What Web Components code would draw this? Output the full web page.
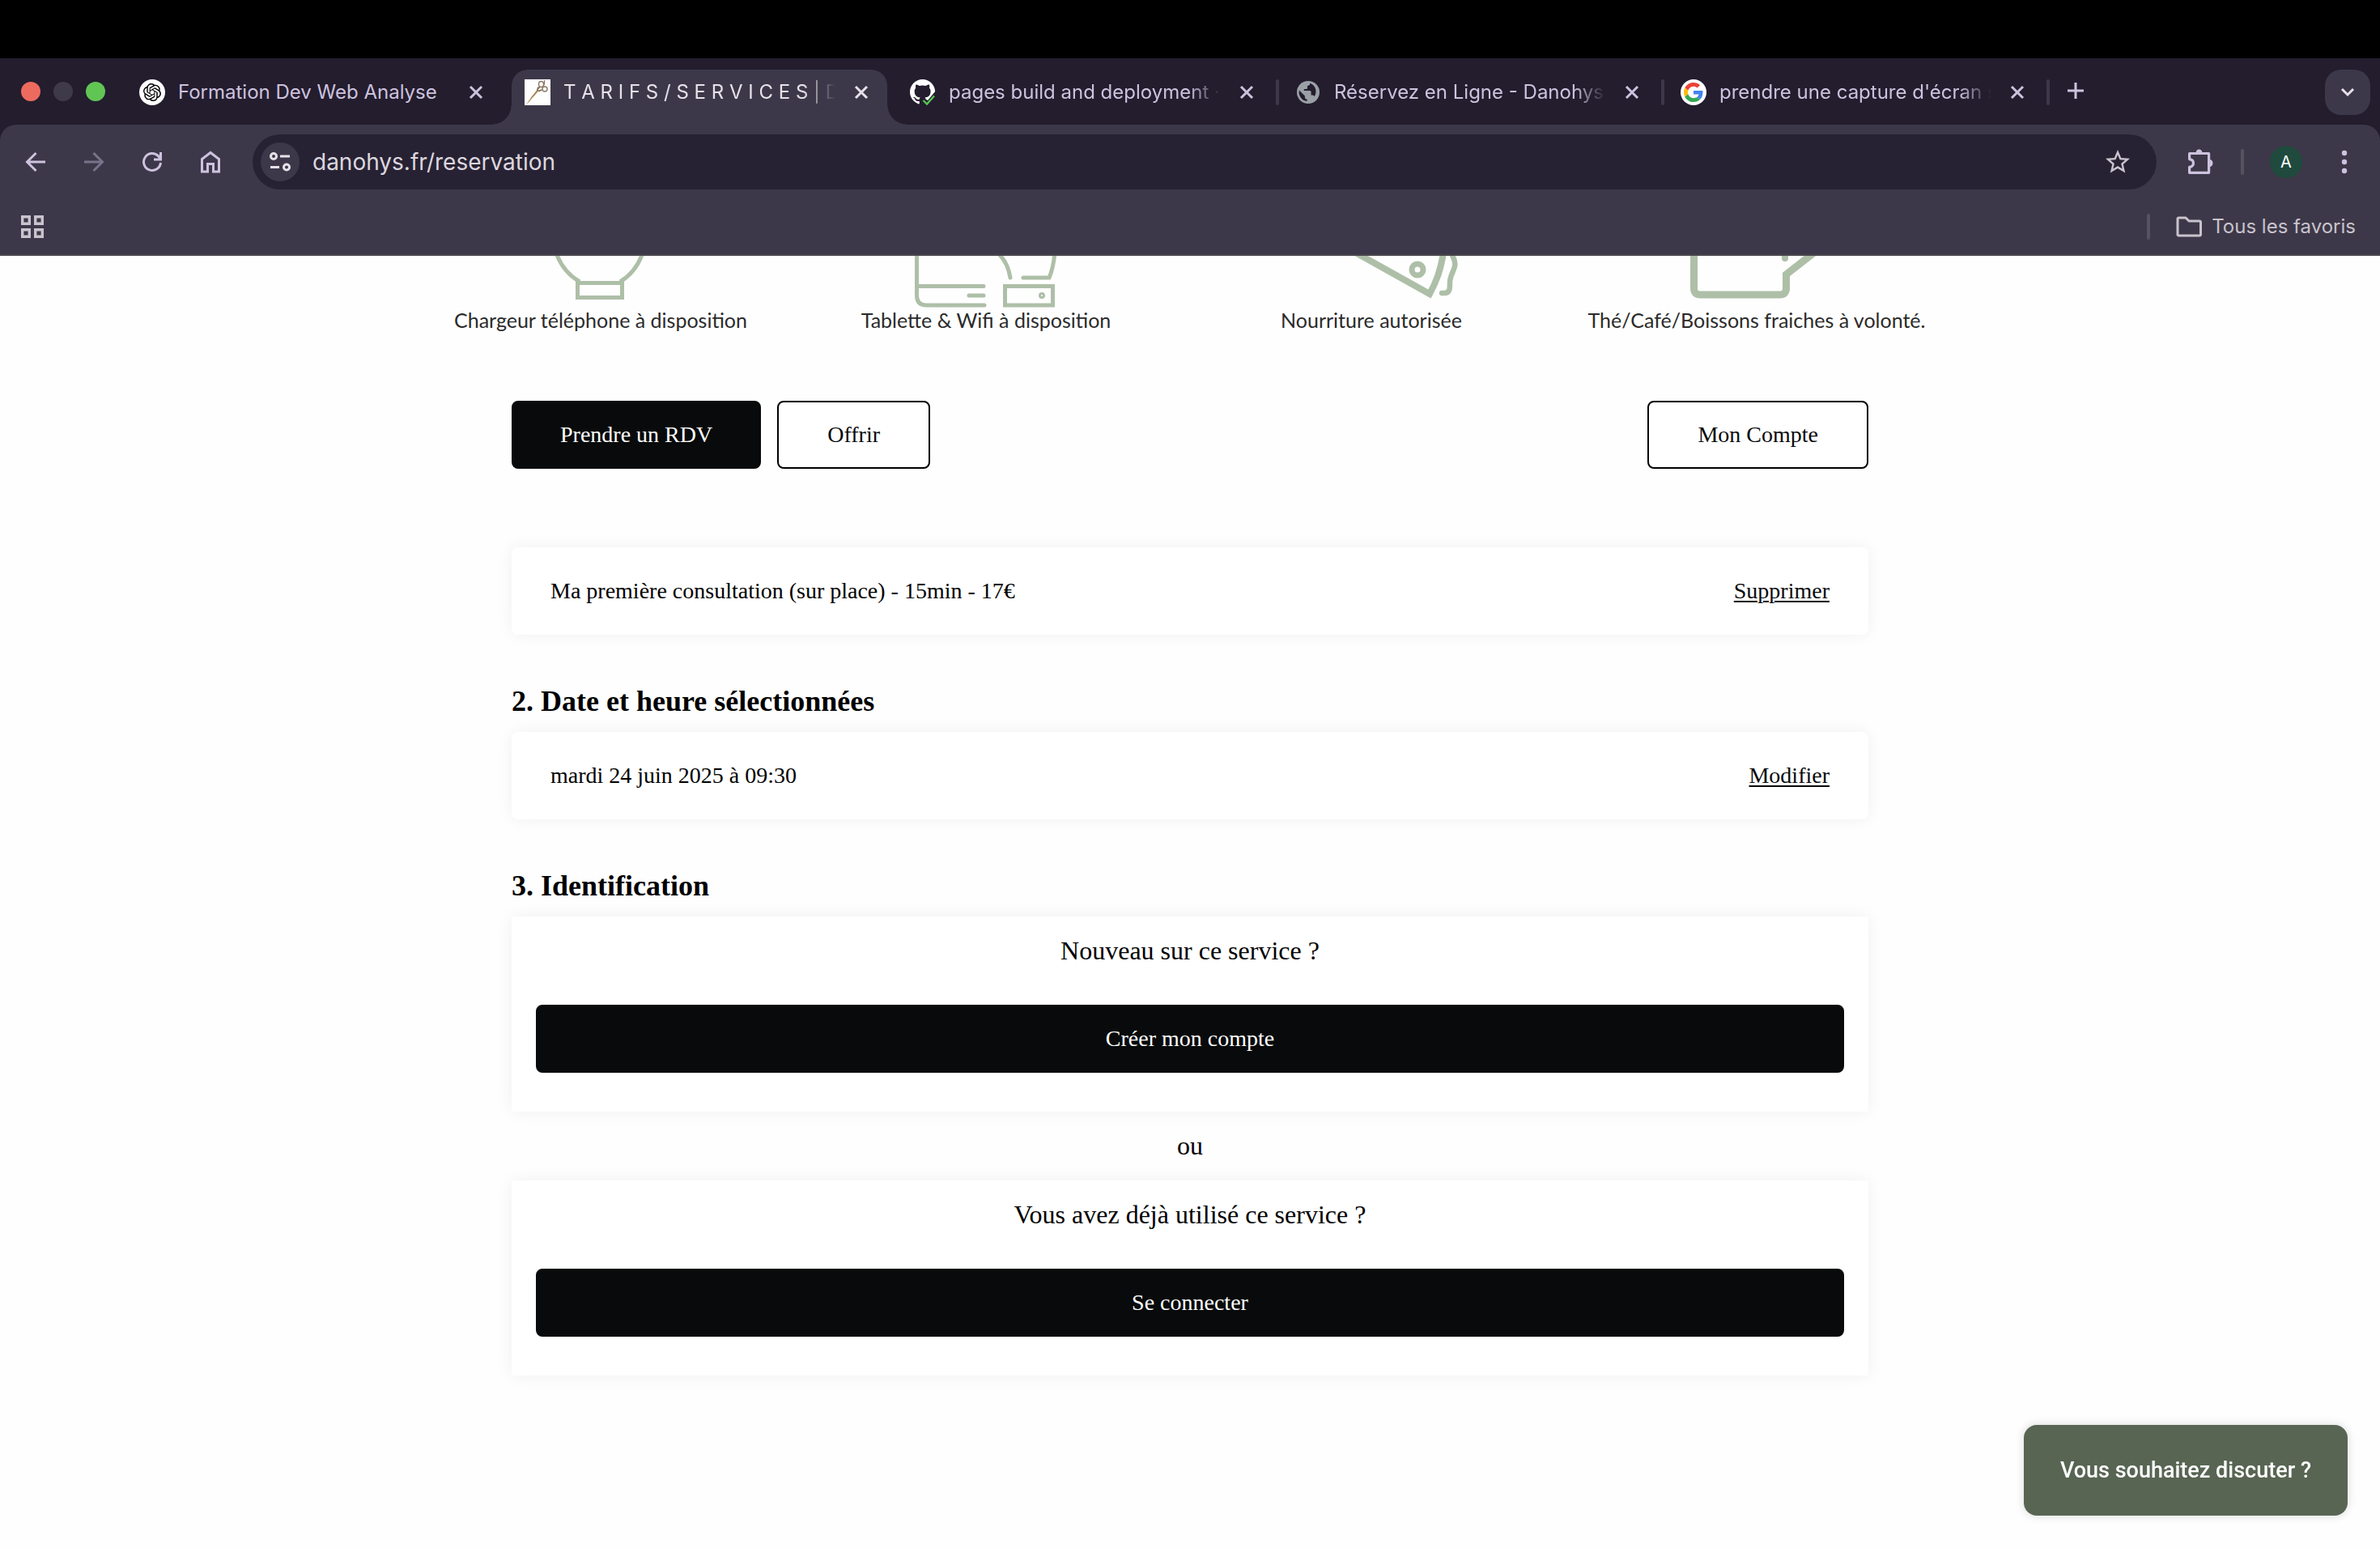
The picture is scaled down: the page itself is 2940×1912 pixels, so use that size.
<!DOCTYPE html>
<html lang="fr">
<head>
<meta charset="utf-8">
<meta name="viewport" content="width=device-width, initial-scale=1">
<title>TARIFS/SERVICES | Danohys</title>
<style>
  html { background: #fefefe; }
  body { margin: 0; font-family: "Liberation Serif", "Times New Roman", serif; color: #000; }
</style>
</head>
<body>
<browser-chrome></browser-chrome>
<main>
  <feature-row>
    <feature-item icon="charger">Chargeur téléphone à disposition</feature-item>
    <feature-item icon="tablet">Tablette &amp; Wifi à disposition</feature-item>
    <feature-item icon="food">Nourriture autorisée</feature-item>
    <feature-item icon="drink">Thé/Café/Boissons fraiches à volonté.</feature-item>
  </feature-row>
  <booking-flow></booking-flow>
</main>
<chat-launcher>Vous souhaitez discuter ?</chat-launcher>

<script>
const define = (name, html) => {
  const tpl = document.createElement('template');
  tpl.innerHTML = html;
  customElements.define(name, class extends HTMLElement {
    constructor() {
      super();
      this.attachShadow({ mode: 'open' }).append(tpl.content.cloneNode(true));
    }
  });
};

const ICONS = {
  openai: `<svg viewBox="0 0 32 32" width="32" height="32"><circle cx="16" cy="16" r="16" fill="#fff"/><path transform="translate(5 5) scale(.917)" d="M22.2819 9.8211a5.9847 5.9847 0 0 0-.5157-4.9108 6.0462 6.0462 0 0 0-6.5098-2.9A6.0651 6.0651 0 0 0 4.9807 4.1818a5.9847 5.9847 0 0 0-3.9977 2.9 6.0462 6.0462 0 0 0 .7427 7.0966 5.98 5.98 0 0 0 .511 4.9107 6.051 6.051 0 0 0 6.5146 2.9001A5.9847 5.9847 0 0 0 13.2599 24a6.0557 6.0557 0 0 0 5.7718-4.2058 5.9894 5.9894 0 0 0 3.9977-2.9001 6.0557 6.0557 0 0 0-.7475-7.0729zm-9.022 12.6081a4.4755 4.4755 0 0 1-2.8764-1.0408l.1419-.0804 4.7783-2.7582a.7948.7948 0 0 0 .3927-.6813v-6.7369l2.02 1.1686a.071.071 0 0 1 .038.052v5.5826a4.504 4.504 0 0 1-4.4945 4.4944zm-9.6607-4.1254a4.4708 4.4708 0 0 1-.5346-3.0137l.142.0852 4.783 2.7582a.7712.7712 0 0 0 .7806 0l5.8428-3.3685v2.3324a.0804.0804 0 0 1-.0332.0615L9.74 19.9502a4.4992 4.4992 0 0 1-6.1408-1.6464zM2.3408 7.8956a4.485 4.485 0 0 1 2.3655-1.9728V11.6a.7664.7664 0 0 0 .3879.6765l5.8144 3.3543-2.0201 1.1685a.0757.0757 0 0 1-.071 0l-4.8303-2.7865A4.504 4.504 0 0 1 2.3408 7.872zm16.5963 3.8558L13.1038 8.364 15.1192 7.2a.0757.0757 0 0 1 .071 0l4.8303 2.7913a4.4944 4.4944 0 0 1-.6765 8.1042v-5.6772a.79.79 0 0 0-.407-.667zm2.0107-3.0231l-.142-.0852-4.7735-2.7818a.7759.7759 0 0 0-.7854 0L9.409 9.2297V6.8974a.0662.0662 0 0 1 .0284-.0615l4.8303-2.7866a4.4992 4.4992 0 0 1 6.6802 4.66zM8.3065 12.863l-2.02-1.1638a.0804.0804 0 0 1-.038-.0567V6.0742a4.4992 4.4992 0 0 1 7.3757-3.4537l-.142.0805L8.704 5.459a.7948.7948 0 0 0-.3927.6813zm1.0976-2.3654l2.602-1.4998 2.6069 1.4998v2.9994l-2.5974 1.4997-2.6067-1.4997Z"/></svg>`,
  scissors: `<svg viewBox="0 0 32 32" width="32" height="32" fill="none"><path fill="#fff" d="M0 0h32v32H0z"/><path d="M2.500 31 8 22.500 16 12.500 17.500 14 10 22.500Z" fill="#8a6238"/><path d="M3.500 29.500 16.500 14" stroke="#c9a86b" stroke-width="1"/><path d="M15.500 13.500 17 9.500M17 14.500 21.500 13M16 12c1-1 2-1 3-3" stroke="#75604a" stroke-width="1.500"/><ellipse cx="20.500" cy="6" rx="3" ry="3.500" stroke="#8b7a66" stroke-width="1.400"/><circle cx="25" cy="12" r="3" stroke="#8b7a66" stroke-width="1.400"/><path d="M24.500 1c0 3 .6 4-.8 6.500" stroke="#8b7a66" stroke-width="1.200"/></svg>`,
  github: `<svg viewBox="0 0 32 32" width="32" height="32"><path transform="scale(1.95)" fill="#fff" d="M8 0C3.580 0 0 3.580 0 8c0 3.540 2.290 6.530 5.470 7.590.4.07.55-.17.55-.38 0-.19-.01-.82-.01-1.490-2.010.37-2.530-.49-2.690-.94-.09-.23-.48-.94-.82-1.130-.28-.15-.68-.52-.01-.53.63-.01 1.080.58 1.230.82.72 1.210 1.870.87 2.330.66.07-.52.28-.87.51-1.070-1.780-.2-3.640-.89-3.640-3.950 0-.87.31-1.590.82-2.150-.08-.2-.36-1.020.08-2.120 0 0 .67-.21 2.200.82.64-.18 1.320-.27 2-.27.68 0 1.360.09 2 .27 1.530-1.040 2.200-.82 2.200-.82.44 1.100.16 1.920.08 2.120.51.56.82 1.270.82 2.150 0 3.070-1.870 3.750-3.650 3.950.29.25.54.73.54 1.480 0 1.070-.01 1.930-.01 2.200 0 .21.15.46.55.38A8.013 8.013 0 0 0 16 8c0-4.420-3.580-8-8-8z"/><path fill="#231d2e" d="M12.500 24.500 17 23l5 3 10-12v18H12.500z"/><path d="M16.500 26l4.500 4.500L30 20.500" fill="none" stroke="#57c452" stroke-width="2.400"/></svg>`,
  globe: `<svg viewBox="0 0 32 32" width="32" height="32"><circle cx="16" cy="16" r="14" fill="#9aa0a6"/><path fill="#231d2e" d="M18.500 4.800c-.3 2-1.300 3-3.500 3.200v2.500c0 1-.8 1.600-1.800 1.600h-2.400V14H18c1 0 1.600.8 1.600 1.600v4h1.500c1.200 0 2 .7 2.500 1.700A11 11 0 0 0 18.500 4.800zM4.900 13.500A11.200 11.200 0 0 0 14.600 27v-2.200c-1.500 0-2.700-1.300-2.700-2.800v-1.400z"/></svg>`,
  google: `<svg viewBox="0 0 32 32" width="32" height="32"><circle cx="16" cy="16" r="16" fill="#fff"/><g transform="translate(4 4) scale(.5)"><path fill="#EA4335" d="M24 9.500c3.540 0 6.710 1.220 9.210 3.600l6.850-6.850C35.900 2.380 30.470 0 24 0 14.620 0 6.510 5.380 2.560 13.220l7.980 6.190C12.430 13.720 17.740 9.500 24 9.500z"/><path fill="#4285F4" d="M46.980 24.550c0-1.570-.15-3.090-.38-4.550H24v9.020h12.940c-.58 2.960-2.260 5.480-4.780 7.180l7.730 6c4.510-4.180 7.090-10.360 7.090-17.650z"/><path fill="#FBBC05" d="M10.530 28.590c-.48-1.450-.76-2.990-.76-4.590s.27-3.140.76-4.590l-7.980-6.190C.92 16.460 0 20.120 0 24c0 3.880.92 7.540 2.560 10.780l7.970-6.190z"/><path fill="#34A853" d="M24 48c6.480 0 11.930-2.130 15.890-5.810l-7.730-6c-2.150 1.450-4.920 2.300-8.160 2.300-6.260 0-11.570-4.220-13.470-9.910l-7.980 6.190C6.510 42.620 14.620 48 24 48z"/></g></svg>`
};

define('tab-strip', `
  <style>
    :host { display: flex; align-items: flex-start; padding: 14px 12px 0 26px; height: 68px; }
    .lights { display: flex; gap: 16px; padding-top: 15px; width: 130px; box-sizing: border-box; }
    .lights button { width: 24px; height: 24px; padding: 0; border: 0; border-radius: 50%; background: #3f3a49; }
    .lights .close { background: #ed6a5e; }
    .lights .zoom { background: #61c554; }
    nav { display: flex; flex: 1; min-width: 0; }
    .new, .search { display: grid; place-items: center; padding: 0; border: 0; background: none; }
    .new { width: 56px; height: 52px; }
    .search { width: 56px; height: 56px; border-radius: 20px; background: #3d3849; }
  </style>
  <div class="lights">
    <button class="close" aria-label="Fermer"></button><button aria-label="Réduire"></button><button class="zoom" aria-label="Agrandir"></button>
  </div>
  <nav>
    <browser-tab icon="openai">Formation Dev Web Analyse</browser-tab>
    <browser-tab icon="scissors" active clipped>T A R I F S / S E R V I C E S | D</browser-tab>
    <browser-tab icon="github" divided clipped>pages build and deployment ·</browser-tab>
    <browser-tab icon="globe" divided clipped>Réservez en Ligne - Danohys</browser-tab>
    <browser-tab icon="google" divided clipped>prendre une capture d'écran s</browser-tab>
    <button class="new" aria-label="Nouvel onglet"><svg width="22" height="22" fill="none" stroke="#cdc2de" stroke-width="3"><path d="M11 1v20M1 11h20"/></svg></button>
  </nav>
  <button class="search" aria-label="Rechercher dans les onglets"><svg width="20" height="14" fill="none" stroke="#e6e1e9" stroke-width="3"><path d="M3 3l7 7 7-7"/></svg></button>
`);

customElements.define('browser-tab', class extends HTMLElement {
  constructor() {
    super();
    this.attachShadow({ mode: 'open' });
  }
  connectedCallback() {
    this.shadowRoot.innerHTML = `
      <style>
        :host { display: flex; flex: 0 1 476px; min-width: 0; color: #cdc2de; }
        .tab { position: relative; display: flex; align-items: center; gap: 16px; flex: 1; min-width: 0; height: 68px; padding: 0 16px 12px; box-sizing: border-box; }
        .gap { width: 12px; height: 32px; margin-top: 12px; display: grid; place-items: center; }
        :host([divided]) .gap::before { content: ""; width: 4px; height: 32px; border-radius: 2px; background: #3d3849; }
        :host([active]) { color: #e6e1e9; }
        :host([active]) .tab { background: #3d3849; border-radius: 20px 20px 0 0; }
        :host([active]) .tab::before, :host([active]) .tab::after { content: ""; position: absolute; bottom: 0; width: 24px; height: 24px; }
        :host([active]) .tab::before { right: 100%; background: radial-gradient(circle at 0 0, transparent 23px, #3d3849 24px); }
        :host([active]) .tab::after { left: 100%; background: radial-gradient(circle at 100% 0, transparent 23px, #3d3849 24px); }
        svg { flex: none; display: block; }
        .title { flex: 1; min-width: 0; overflow: hidden; white-space: nowrap; font-size: 24px; line-height: 32px; }
        :host([clipped]) .title { -webkit-mask-image: linear-gradient(90deg, #000 calc(100% - 40px), transparent); mask-image: linear-gradient(90deg, #000 calc(100% - 40px), transparent); }
        button { width: 32px; height: 32px; padding: 0; border: 0; background: none; display: grid; place-items: center; color: inherit; }
      </style>
      <div class="tab">${ICONS[this.getAttribute('icon')]}<span class="title"><slot></slot></span>
        <button aria-label="Fermer l'onglet"><svg width="18" height="18" fill="none" stroke="currentColor" stroke-width="3"><path d="M2 2l14 14M16 2 2 16"/></svg></button>
      </div><div class="gap"></div>`;
  }
});

define('tool-bar', `
  <style>
    :host { display: flex; align-items: center; padding: 12px 14px; height: 68px; }
    button { display: grid; place-items: center; width: 60px; height: 56px; padding: 0; border: 0; background: none; color: #cdc2de; font: inherit; }
    .nav { display: flex; gap: 12px; margin-right: 22px; }
    .nav .dim { color: #79738a; }
    .omni { flex: 1; min-width: 0; display: flex; align-items: center; height: 68px; padding: 0 18px 0 10px; box-sizing: border-box; border-radius: 34px; background: #272233; }
    .omni .info { width: 48px; height: 48px; border-radius: 50%; background: #3d3849; color: #e6e1e9; }
    .omni .star { color: #c8c3cc; }
    input { flex: 1; min-width: 0; margin: 0 0 0 16px; padding: 0; border: 0; outline: 0; background: none; color: #dcd7df; font: inherit; font-size: 28px; line-height: 36px; }
    .right { display: flex; align-items: center; }
    .ext { margin-left: 24px; }
    hr { width: 4px; height: 32px; margin: 0 22px 0 20px; border: 0; border-radius: 2px; background: #57525f; }
    .me span { display: grid; place-items: center; width: 40px; height: 40px; border-radius: 50%; background: #1f4a3d; color: #fff; font-size: 20px; line-height: 24px; }
    .more { margin-left: 12px; }
  </style>
  <div class="nav">
    <button aria-label="Retour"><svg width="26" height="26" fill="none" stroke="currentColor" stroke-width="3"><path d="M25 13H3M13.500 2 2.500 13l11 11"/></svg></button>
    <button class="dim" aria-label="Avancer"><svg width="26" height="26" fill="none" stroke="currentColor" stroke-width="3"><path d="M1 13h22M12.500 2l11 11-11 11"/></svg></button>
    <button aria-label="Actualiser"><svg width="26" height="26" fill="none" stroke="currentColor" stroke-width="3"><path d="M23.500 14A10.500 10.500 0 1 1 20.500 5.600L23 9"/><path d="M23.500 1v9H15"/></svg></button>
    <button aria-label="Accueil"><svg width="26" height="28" fill="none" stroke="currentColor" stroke-width="3"><path d="M2.500 10.500 13 2.500l10.500 8V26h-7v-9.500h-7V26h-7z"/></svg></button>
  </div>
  <div class="omni">
    <button class="info" aria-label="Informations sur le site"><svg width="28" height="26" fill="none" stroke="currentColor" stroke-width="3"><circle cx="6" cy="6" r="3.500"/><path d="M14 6h12M2 19.500h11"/><circle cx="22" cy="19.500" r="3.500"/></svg></button>
    <input type="text" aria-label="Adresse" value="danohys.fr/reservation">
    <button class="star" aria-label="Ajouter aux favoris"><svg width="36" height="36" viewBox="0 0 24 24" fill="currentColor"><path d="M22 9.240l-7.190-.62L12 2 9.190 8.630 2 9.240l5.460 4.730L5.820 21 12 17.270 18.180 21l-1.630-7.030L22 9.240zM12 15.400l-3.760 2.270 1-4.280-3.320-2.880 4.380-.38L12 6.100l1.710 4.040 4.380.38-3.320 2.880 1 4.280L12 15.400z"/></svg></button>
  </div>
  <div class="right">
    <button class="ext" aria-label="Extensions"><svg width="36" height="36" fill="none" stroke="currentColor" stroke-width="3.200" stroke-linejoin="round"><path d="M4.600 7.500h24v23.800h-24v-7c6.500-1 6.500-8.800 0-9.700z"/><path fill="currentColor" stroke="none" d="M12.500 7a4 4.500 0 0 1 8 0zM29.500 15a4 4.500 0 0 1 0 9z"/></svg></button>
    <hr>
    <button class="me" aria-label="Profil"><span>A</span></button>
    <button class="more" aria-label="Menu"><svg width="8" height="30" fill="currentColor"><circle cx="4" cy="4" r="3.200"/><circle cx="4" cy="15" r="3.200"/><circle cx="4" cy="26" r="3.200"/></svg></button>
  </div>
`);

define('bookmark-bar', `
  <style>
    :host { display: flex; align-items: center; justify-content: space-between; height: 68px; padding: 0 30px 0 26px; border-bottom: 2px solid #4a464c; }
    button { display: flex; align-items: center; gap: 12px; padding: 0; border: 0; background: none; color: #c8c3cc; font: inherit; font-size: 24px; line-height: 32px; }
    .all { display: flex; align-items: center; gap: 32px; }
    .all::before { content: ""; width: 4px; height: 32px; border-radius: 2px; background: #57525f; }
  </style>
  <button aria-label="Applications"><svg width="28" height="28" fill="none" stroke="currentColor" stroke-width="3.400"><path d="M1.700 1.700h8.600v8.600H1.700zM17.700 1.700h8.600v8.600h-8.600zM1.700 17.700h8.600v8.600H1.700zM17.700 17.700h8.600v8.600h-8.600z"/></svg></button>
  <div class="all"><button><svg width="32" height="26" fill="none" stroke="currentColor" stroke-width="3" stroke-linejoin="round"><path d="M2 3.500Q2 2 3.500 2H12l4 4h13q1.500 0 1.500 1.500v15Q30.500 24 29 24H3.500Q2 24 2 22.500z"/></svg>Tous les favoris</button></div>
`);

define('browser-chrome', `
  <style>
    :host { display: block; font-family: Inter, "Noto Sans", sans-serif; background: #231d2e; border-top: 72px solid #000; }
    .frame { background: #3d3849; border-radius: 20px 20px 0 0; }
  </style>
  <tab-strip></tab-strip>
  <div class="frame"><tool-bar></tool-bar><bookmark-bar></bookmark-bar></div>
`);

const DRAWINGS = {
  charger: `<svg width="160" height="64" stroke-width="5"><path d="M25-4C30 11 39 23 54 32M132-4C127 11 119 23 104 32"/><path d="M51.500 33.500h55v18h-55z"/></svg>`,
  tablet: `<svg width="200" height="64" stroke-width="5" stroke-linecap="round"><path d="M14.500-4v53q0 12 12 12H98M15 37.500h82M79 49h18M115-3c9 8 13 18 15 30M146 27h32q5-11 7-31"/><path d="M123.500 37.500h59v23.500h-59z" stroke-linecap="butt"/><circle cx="169" cy="49" r="2.500" stroke-width="3"/></svg>`,
  food: `<svg width="220" height="64" stroke-width="7"><path d="M87-6 182 47Q195 24 199-4" stroke-width="8"/><circle cx="167" cy="17" r="7"/><path d="M208-5c2 6 7 10 5 18s-6 12-6 20 0 13-7 13h-3" stroke-width="6.500" stroke-linecap="round"/></svg>`,
  drink: `<svg width="200" height="64" stroke-width="9"><path d="M22.500-4V40q0 8 8 8h98q8 0 8-8V23L171-4"/><path d="M135 3v-8" stroke-linecap="round" stroke-width="8"/></svg>`
};

customElements.define('feature-item', class extends HTMLElement {
  constructor() {
    super();
    this.attachShadow({ mode: 'open' });
  }
  connectedCallback() {
    this.shadowRoot.innerHTML = `
      <style>
        :host { display: flex; flex-direction: column; align-items: center; white-space: nowrap; color: #2b2b2b; font-family: Lato, "Open Sans", sans-serif; font-size: 25px; line-height: 31px; }
        svg { display: block; fill: none; stroke: #aebfa8; }
      </style>
      ${DRAWINGS[this.getAttribute('icon')]}<span><slot></slot></span>`;
  }
});

define('feature-row', `
  <style>
    :host { display: grid; grid-template-columns: repeat(4, minmax(0, 476px)); justify-content: center; padding-right: 28px; overflow: hidden; }
  </style>
  <slot></slot>
`);

define('action-button', `
  <style>
    :host { display: block; }
    button { width: 100%; height: 84px; padding: 0 58px; border: 2px solid #080a0b; border-radius: 8px; background: #080a0b; color: #fff; font: inherit; font-size: 28px; line-height: 32px; white-space: nowrap; }
    :host([outline]) button { padding: 0 60px; background: #fff; border-color: #000; color: #080a0b; }
  </style>
  <button><slot></slot></button>
`);

define('summary-card', `
  <style>
    :host { display: flex; align-items: center; justify-content: space-between; height: 108px; padding: 0 48px; border-radius: 8px; background: #fff; box-shadow: 0 0 20px rgba(0, 0, 0, .06); font-size: 28px; line-height: 32px; }
    ::slotted(a) { color: #080a0b; text-decoration: underline; text-decoration-thickness: 2px; text-underline-offset: 3px; }
  </style>
  <slot></slot><slot name="action"></slot>
`);

define('choice-card', `
  <style>
    :host { display: block; padding: 24px 30px 48px; background: #fff; box-shadow: 0 0 20px rgba(0, 0, 0, .06); text-align: center; }
    p { margin: 0 0 48px; font-size: 32px; line-height: 37px; }
  </style>
  <p><slot name="title"></slot></p><slot></slot>
`);

define('booking-flow', `
  <style>
    :host { display: block; max-width: 1676px; margin: 84px auto 0; padding-bottom: 213px; }
    .actions { display: flex; gap: 20px; margin-bottom: 97px; }
    .account { margin-left: auto; }
    h2 { margin: 62px 0 18px; font-size: 36px; line-height: 40px; font-weight: 700; }
    .or { margin: 24px 0; text-align: center; font-size: 32px; line-height: 37px; }
  </style>
  <div class="actions">
    <action-button>Prendre un RDV</action-button>
    <action-button outline>Offrir</action-button>
    <action-button outline class="account">Mon Compte</action-button>
  </div>
  <summary-card><span>Ma première consultation (sur place) - 15min - 17€</span><a slot="action" href="#">Supprimer</a></summary-card>
  <h2>2. Date et heure sélectionnées</h2>
  <summary-card><span>mardi 24 juin 2025 à 09:30</span><a slot="action" href="#">Modifier</a></summary-card>
  <h2>3. Identification</h2>
  <choice-card><span slot="title">Nouveau sur ce service ?</span><action-button>Créer mon compte</action-button></choice-card>
  <p class="or">ou</p>
  <choice-card><span slot="title">Vous avez déjà utilisé ce service ?</span><action-button>Se connecter</action-button></choice-card>
`);

define('chat-launcher', `
  <style>
    :host { position: fixed; right: 40px; bottom: 40px; }
    button { height: 112px; width: 400px; padding: 0; border: 0; border-radius: 16px; background: #586553; box-shadow: 0 0 12px rgba(0, 0, 0, .15); color: #fff; font-family: Roboto, sans-serif; font-size: 27px; line-height: 40px; font-weight: 500; white-space: nowrap; }
  </style>
  <button><slot></slot></button>
`);
</script>
</body>
</html>
